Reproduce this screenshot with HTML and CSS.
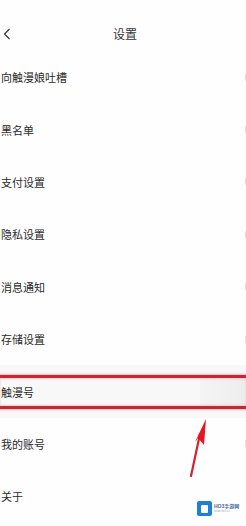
FILE: index.html
```html
<!DOCTYPE html>
<html lang="zh-CN">
<head>
<meta charset="utf-8">
<link rel="stylesheet" href="styles.css">
</head>
<body>
<div class="page">
  <header class="header">
    <svg class="back" width="8" height="12" viewBox="0 0 8 12"><path d="M6.5 1 L1.5 6 L6.5 11" fill="none" stroke="#333" stroke-width="1.2"/></svg>
    <div class="title">设置</div>
  </header>
  <ul class="list">
    <li class="row"><span>向触漫娘吐槽</span><i class="chev"></i></li>
    <li class="row"><span>黑名单</span><i class="chev"></i></li>
    <li class="row"><span>支付设置</span><i class="chev"></i></li>
    <li class="row"><span>隐私设置</span><i class="chev"></i></li>
    <li class="row"><span>消息通知</span><i class="chev"></i></li>
    <li class="row"><span>存储设置</span><i class="chev"></i></li>
    <li class="row hl"><span>触漫号</span><i class="patch"></i></li>
    <li class="row"><span>我的账号</span><i class="chev"></i></li>
    <li class="row"><span>关于</span></li>
  </ul>
  <div class="redbox"></div>
  <svg class="arrow" width="30" height="70" viewBox="0 0 30 70">
    <path d="M8 64 L17 22" stroke="#d3232e" stroke-width="2.2" stroke-linecap="round" fill="none"/>
    <path d="M23 7 L12 30 L15 26 L21 33 Z" fill="#e8141e"/>
  </svg>
  <div class="wm">
    <div class="wm-icon"><div class="wm-in"></div></div>
    <div class="wm-text"><div class="wm-t1">HO3手游网</div><div class="wm-t2">www.ho3.cn</div></div>
  </div>
</div>
</body>
</html>
```
FILE: styles.css
```css
* { box-sizing: border-box; margin: 0; padding: 0; }
html, body { width: 246px; height: 526px; overflow: hidden; background: #fff; }
body { font-family: "Noto Sans CJK SC", "Noto Sans", sans-serif; color: #222; }
.page { position: relative; width: 246px; height: 526px; background: #fefefe; }
.header { height: 51px; position: relative; display: flex; justify-content: center; padding-top: 25px; padding-left: 4px; }
.back { position: absolute; left: 3px; top: 28px; }
.title { font-size: 12px; line-height: 18px; color: #333; }
.list { list-style: none; }
.row { height: 52.4px; display: flex; align-items: center; justify-content: space-between; padding-left: 1px; font-size: 11px; color: #2a2a2a; }
.chev { width: 2px; height: 7px; border-right: 1px solid #dedede; }
.hl { background: #f8f8f8; position: relative; }
.patch { width: 46px; height: 26px; background: linear-gradient(90deg, #f4f4f4, #ededed); }
.redbox { position: absolute; left: -4px; right: -4px; top: 375px; height: 34px; border: 3px solid #c42838; box-shadow: 0 0 2px 1px rgba(230,120,130,0.5), inset 0 0 2px 1px rgba(230,120,130,0.4); }
.arrow { position: absolute; left: 183px; top: 412px; }
.wm { position: absolute; left: 197px; top: 501px; display: flex; align-items: center; gap: 2px; }
.wm-icon { width: 15px; height: 15px; background: #1e7fd8; border-radius: 2px; display: flex; align-items: center; justify-content: center; }
.wm-in { width: 7px; height: 8px; background: #fff; border-radius: 1px; }
.wm-text { line-height: 1; }
.wm-t1 { font-size: 5px; font-weight: bold; color: #4a6fa0; font-family: "Liberation Sans", "Noto Sans CJK SC", sans-serif; }
.wm-t2 { font-size: 3px; color: #aab; margin-top: 1px; font-family: "Liberation Sans", sans-serif; }
```
